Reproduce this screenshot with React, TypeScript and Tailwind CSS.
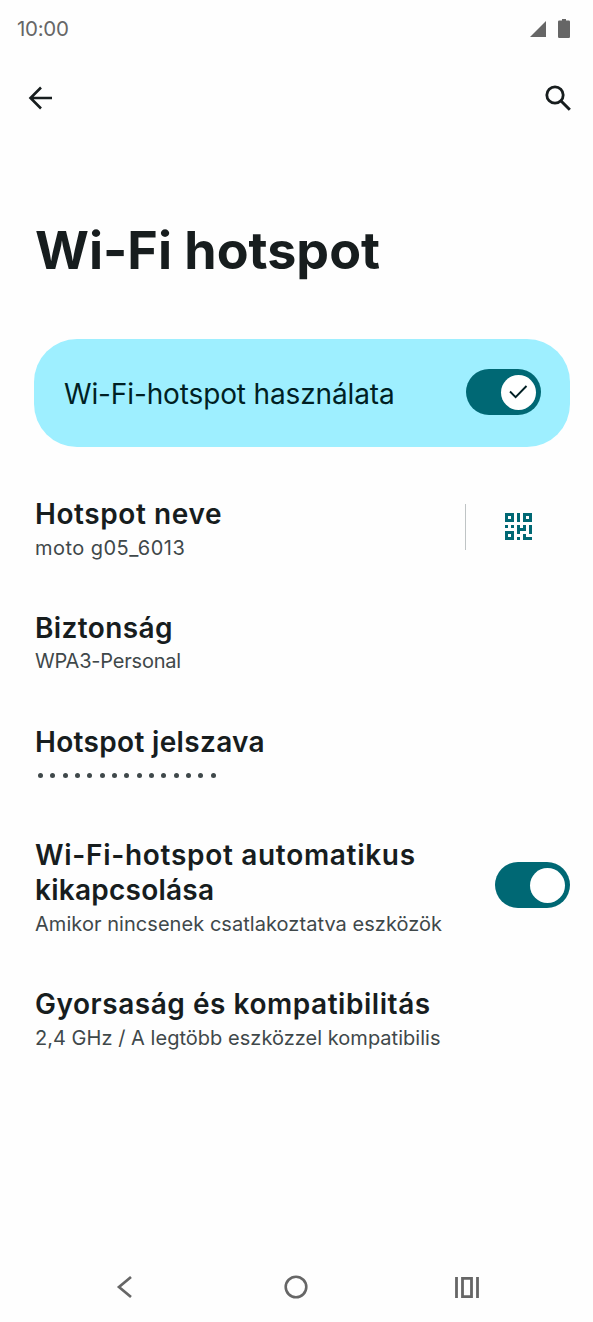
import React, { useState } from 'react';

const QR_ROWS = [
  '111010111',
  '101010101',
  '111010111',
  '000000000',
  '101010101',
  '000011101',
  '111010001',
  '101000100',
  '111010111',
];

function QrIcon() {
  return (
    <svg viewBox="0 0 9 9" className="w-[27px] h-[27px]" fill="#006874" shapeRendering="crispEdges">
      {QR_ROWS.map((row, y) =>
        row.split('').map((cell, x) =>
          cell === '1' ? <rect key={`${x}-${y}`} x={x} y={y} width="1" height="1" /> : null
        )
      )}
    </svg>
  );
}

interface SwitchProps {
  checked: boolean;
  onChange: () => void;
  label: string;
  withCheck?: boolean;
}

function Switch({ checked, onChange, label, withCheck }: SwitchProps) {
  return (
    <button
      role="switch"
      aria-checked={checked}
      aria-label={label}
      onClick={onChange}
      className={`flex h-[46px] w-[75px] shrink-0 items-center rounded-full px-[5.5px] ${
        checked ? 'justify-end bg-[#006874]' : 'justify-start bg-gray-400'
      }`}
    >
      <span className="flex h-[35px] w-[35px] items-center justify-center rounded-full bg-white">
        {withCheck && checked && (
          <svg viewBox="0 0 20 16" className="h-4 w-5" fill="none" stroke="#001f24" strokeWidth="1.9">
            <path d="M2 7.5 L7.6 13.2 L18.5 2" />
          </svg>
        )}
      </span>
    </button>
  );
}

interface SettingProps {
  title: React.ReactNode;
  children: React.ReactNode;
  action?: React.ReactNode;
}

function Setting({ title, children, action }: SettingProps) {
  return (
    <div className="flex items-center justify-between">
      <div className="whitespace-nowrap">
        <h2 className="text-[28px] leading-[35px] font-semibold text-[#171d1e]">{title}</h2>
        <div className="flex h-[31px] items-center text-[20px] text-[#3f484a]">{children}</div>
      </div>
      {action}
    </div>
  );
}

export default function App() {
  const [hotspotOn, setHotspotOn] = useState(true);
  const [autoOff, setAutoOff] = useState(true);

  return (
    <div className="flex h-[1322px] w-[593px] flex-col overflow-hidden bg-[#fefefe] font-[Inter,sans-serif]">
      {/* Status bar */}
      <div className="flex h-[58px] items-center justify-between pr-[23px] pl-[17px] text-[#666]">
        <span className="text-[20.5px] tracking-[-0.3px]">10:00</span>
        <div className="flex items-center gap-3 pb-px">
          <svg viewBox="0 0 16 16" className="h-4 w-4" fill="#666">
            <path d="M16 0V16H0Z" />
          </svg>
          <svg viewBox="0 0 12 19" className="h-[19px] w-3" fill="#666">
            <path d="M4 0H8V1.5H10.8Q12 1.5 12 2.7V17.8Q12 19 10.8 19H1.2Q0 19 0 17.8V2.7Q0 1.5 1.2 1.5H4Z" />
          </svg>
        </div>
      </div>

      {/* Toolbar */}
      <div className="flex h-20 items-center justify-between pr-[22px] pl-7">
        <button aria-label="Vissza">
          <svg viewBox="0 0 26 24" className="h-6 w-[26px]" fill="none" stroke="#171d1e" strokeWidth="2.6">
            <path d="M24 12H3M13 1.5L2.5 12L13 22.5" />
          </svg>
        </button>
        <button aria-label="Keresés">
          <svg viewBox="0 0 26 26" className="h-[26px] w-[26px]" fill="none" stroke="#171d1e" strokeWidth="2.8">
            <circle cx="10" cy="10" r="8.2" />
            <path d="M15.8 15.8L24.8 24.8" strokeWidth="3" />
          </svg>
        </button>
      </div>

      <h1 className="mt-[83px] pl-[35px] text-[52px] leading-[60px] font-bold whitespace-nowrap text-[#171d1e]">
        Wi-Fi hotspot
      </h1>

      {/* Main toggle */}
      <div className="mt-[58px] mr-[23px] ml-[34px] flex h-[108px] items-center justify-between rounded-[43px] bg-[#9eefff] pr-[29px] pl-[30px]">
        <span className="pt-px text-[28px] tracking-[-0.13px] whitespace-nowrap text-[#001f24]">
          Wi-Fi-hotspot használata
        </span>
        <div className="pb-0.5">
          <Switch checked={hotspotOn} onChange={() => setHotspotOn(!hotspotOn)} label="Wi-Fi-hotspot" withCheck />
        </div>
      </div>

      <div className="mt-[50px] flex flex-col gap-[47.8px] pr-[23px] pl-[35px]">
        <Setting
          title={<span className="tracking-[0.58px]">Hotspot neve</span>}
          action={
            <div className="mb-[7px] flex h-[46px] items-center border-l border-[#bfc4c5] pr-[38px] pl-[39px]">
              <QrIcon />
            </div>
          }
        >
          <span className="tracking-[0.46px]">moto g05_6013</span>
        </Setting>
        <Setting title={<span className="tracking-[0.4px]">Biztonság</span>}>
          <span className="tracking-[-0.21px]">WPA3-Personal</span>
        </Setting>
        <Setting title={<span className="tracking-[0.33px]">Hotspot jelszava</span>}>
          <div className="flex gap-[7.35px] pl-[3px]">
            {Array.from({ length: 15 }, (_, i) => (
              <span key={i} className="h-[5px] w-[5px] rounded-full bg-[#3f484a]" />
            ))}
          </div>
        </Setting>
        <Setting
          title={
            <>
              <span className="tracking-[0.7px]">Wi-Fi-hotspot automatikus</span>
              <br />
              <span className="tracking-[0.24px]">kikapcsolása</span>
            </>
          }
          action={
            <div className="mb-[7px]">
              <Switch checked={autoOff} onChange={() => setAutoOff(!autoOff)} label="Automatikus kikapcsolás" />
            </div>
          }
        >
          <span className="tracking-[0.05px]">Amikor nincsenek csatlakoztatva eszközök</span>
        </Setting>
        <Setting title={<span className="tracking-[0.54px]">Gyorsaság és kompatibilitás</span>}>
          <span className="tracking-[0.03px]">2,4 GHz / A legtöbb eszközzel kompatibilis</span>
        </Setting>
      </div>

      {/* Navigation bar */}
      <div className="mt-auto flex h-[70px] items-center justify-between pr-[114px] pl-[116px]">
        <svg viewBox="0 0 17 24" className="h-6 w-[17px]" fill="none" stroke="#666" strokeWidth="2.7">
          <path d="M15 2L3 12L15 22" />
        </svg>
        <svg viewBox="0 0 24 24" className="ml-[3px] h-6 w-6" fill="none" stroke="#666" strokeWidth="2.6">
          <circle cx="12" cy="12" r="10.3" />
        </svg>
        <svg viewBox="0 0 24 21" className="h-[21px] w-6" fill="none" stroke="#666" strokeWidth="2.8">
          <path d="M1.5 0V21M22.5 0V21M7.5 1.4H16.5V19.6H7.5Z" />
        </svg>
      </div>
    </div>
  );
}
